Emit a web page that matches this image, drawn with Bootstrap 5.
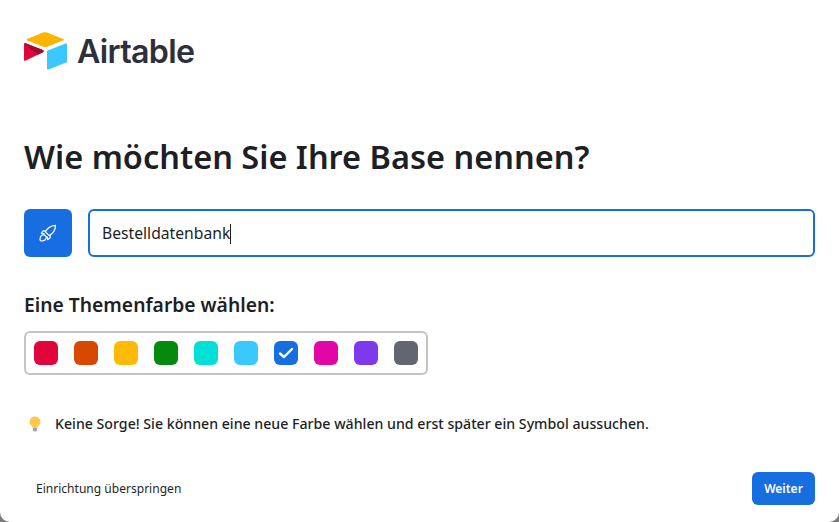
<!DOCTYPE html>
<html lang="de">
<head>
  <meta charset="UTF-8">
  <title>Airtable Base</title>
  <link href="https://cdn.jsdelivr.net/npm/bootstrap@5.3.0/dist/css/bootstrap.min.css" rel="stylesheet">
  <style>
    html, body { height: 100%; }
    body { background: #7d7d7d; font-family: "Noto Sans", sans-serif; color: #1d1f25; overflow: hidden; }
    .sheet { height: 522px; background: #fff; border-radius: 0 0 10px 10px; padding: 0 24px; }
    .brand { height: 209px; padding-top: 30px; }
    .brand-row { height: 42px; }
    .brand-name { font-family: Inter, sans-serif; font-weight: 600; font-size: 32.2px; letter-spacing: -0.7px; color: #2d2f3a; line-height: 42px; margin-left: 9px; padding-top: 2px; }
    .page-title { font-size: 32.5px; font-weight: 600; line-height: 44px; margin: 63px 0 0; }
    .icon-tile { width: 48px; height: 48px; border-radius: 6px; background: #166ee1; }
    .name-input { height: 48px; border: 2px solid #166ee1; border-radius: 6px; padding: 1px 12px 0; font-size: 15.7px; color: #1d1f25; }
    .typed-cursor { width: 1px; height: 20px; background: #1d1f25; }
    .input-row { gap: 16px; }
    .pick-label { font-size: 19.3px; font-weight: 600; line-height: 24px; margin: 36px 0 14px; }
    .swatch-box { width: 404px; height: 44px; border: 2px solid #c4c4c4; border-radius: 6px; padding: 0 8px; gap: 16px; }
    .swatch { width: 24px; height: 24px; border-radius: 6px; }
    .swatch-red { background: #e0063b; }
    .swatch-orange { background: #d74800; }
    .swatch-yellow { background: #ffba05; }
    .swatch-green { background: #068a0e; }
    .swatch-teal { background: #00e0d5; }
    .swatch-sky { background: #3bc8ff; }
    .swatch-blue { background: #166ee1; }
    .swatch-pink { background: #e007a6; }
    .swatch-violet { background: #7f39ec; }
    .swatch-gray { background: #626671; }
    .tip { font-size: 14.17px; font-weight: 500; line-height: 20px; margin-top: 39px; }
    .tip-icon { width: 31px; padding-left: 4px; }
    .foot { margin-top: 38px; }
    .skip-link { font-size: 12.05px; color: #1d1f25; padding-left: 12px; line-height: 33px; text-decoration: none; }
    .next-btn { width: 63px; height: 33px; padding: 0; background: #166ee1; border: 0; border-radius: 6px; font-size: 12px; font-weight: 600; color: #fff; }
  </style>
</head>
<body>
  <div class="sheet">
    <div class="brand">
      <div class="d-flex align-items-center brand-row">
        <svg width="44" height="39" viewBox="0 0 44 39">
          <path d="M19 .6 3 6.900c-.7.3-.7 1.100 0 1.400l16.200 6.400c1.300.5 2.600.5 3.900 0l16.200-6.400c.7-.3.7-1.100 0-1.400L23 .6c-1.300-.5-2.700-.5-4 0z" fill="#fcb400"/>
          <path d="M23 19.500V36.500c0 .7.7 1.200 1.400.9l18-7c.4-.2.6-.5.6-.9V12.500c0-.7-.7-1.200-1.400-.9l-18 7c-.4.2-.6.5-.6.9z" fill="#3bc8ff"/>
          <path d="M19 20.200l-5.400 2.600-.5.3L1.500 28.700C.7 29 0 28.500 0 27.800V12.200c0-.3.1-.5.3-.7.1-.1.2-.2.3-.2.3-.2.6-.2.9-.1l17.300 6.900c.9.3 1 1.700.2 2.100z" fill="#e0063b"/>
          <path d="M19 20.200l-5.400 2.600L.4 11.500c.1-.1.2-.2.3-.2.3-.2.6-.2.9-.1l17.300 6.900c.9.3 1 1.700.1 2.100z" fill="#a5082f"/>
        </svg>
        <span class="brand-name">Airtable</span>
      </div>
      <h1 class="page-title">Wie möchten Sie Ihre Base nennen?</h1>
    </div>

    <div class="d-flex input-row">
      <div class="icon-tile d-flex align-items-center justify-content-center flex-shrink-0">
        <svg width="18" height="18" viewBox="0 0 18 18" fill="none" stroke="#fff" stroke-width="1.200" stroke-linejoin="round" stroke-linecap="round">
          <path d="M6.400 7.800C8.300 4 11.500 1.700 16.500 1.300 16.400 6.300 14 9.700 10.200 11.600L6.400 7.800z"/>
          <path d="M7 6.800H4.200L2.300 9.300l3 .6M11.200 11v2.800l-2.500 1.900-.6-3"/>
          <path d="M4.100 10.800c-1.800.2-2.900 1.900-3.100 4.400-.1 1 .8 1.900 1.800 1.800 2.500-.2 4.200-1.300 4.400-3.100.2-1.800-1.300-3.300-3.100-3.100z"/>
        </svg>
      </div>
      <div class="form-control name-input d-flex align-items-center">Bestelldatenbank<span class="typed-cursor"></span></div>
    </div>

    <div class="pick-label">Eine Themenfarbe wählen:</div>
    <div class="swatch-box d-flex align-items-center">
      <span class="swatch swatch-red"></span>
      <span class="swatch swatch-orange"></span>
      <span class="swatch swatch-yellow"></span>
      <span class="swatch swatch-green"></span>
      <span class="swatch swatch-teal"></span>
      <span class="swatch swatch-sky"></span>
      <span class="swatch swatch-blue d-flex align-items-center justify-content-center">
        <svg width="16" height="12" viewBox="0 0 16 12" fill="none" stroke="#fff" stroke-width="2.400" stroke-linecap="round" stroke-linejoin="round"><path d="M2 6.500 6 10 14 2"/></svg>
      </span>
      <span class="swatch swatch-pink"></span>
      <span class="swatch swatch-violet"></span>
      <span class="swatch swatch-gray"></span>
    </div>

    <div class="tip d-flex align-items-center">
      <span class="tip-icon d-flex">
        <svg width="14" height="16" viewBox="0 0 14 16">
          <path d="M7 .5a5.300 5.300 0 0 0-3.300 9.500c.6.5.8 1.100.9 1.700h4.800c.1-.6.3-1.200.9-1.700A5.300 5.300 0 0 0 7 .5z" fill="#fdc94c"/>
          <path d="M4.800 11.700h4.400v2.300c0 .8-1 1.500-2.200 1.500s-2.200-.7-2.200-1.500z" fill="#a8a0ad"/>
        </svg>
      </span>
      Keine Sorge! Sie können eine neue Farbe wählen und erst später ein Symbol aussuchen.
    </div>

    <div class="foot d-flex justify-content-between align-items-center">
      <a href="#" class="skip-link">Einrichtung überspringen</a>
      <button type="button" class="btn next-btn">Weiter</button>
    </div>
  </div>
  <script src="https://cdn.jsdelivr.net/npm/bootstrap@5.3.0/dist/js/bootstrap.bundle.min.js"></script>
</body>
</html>
